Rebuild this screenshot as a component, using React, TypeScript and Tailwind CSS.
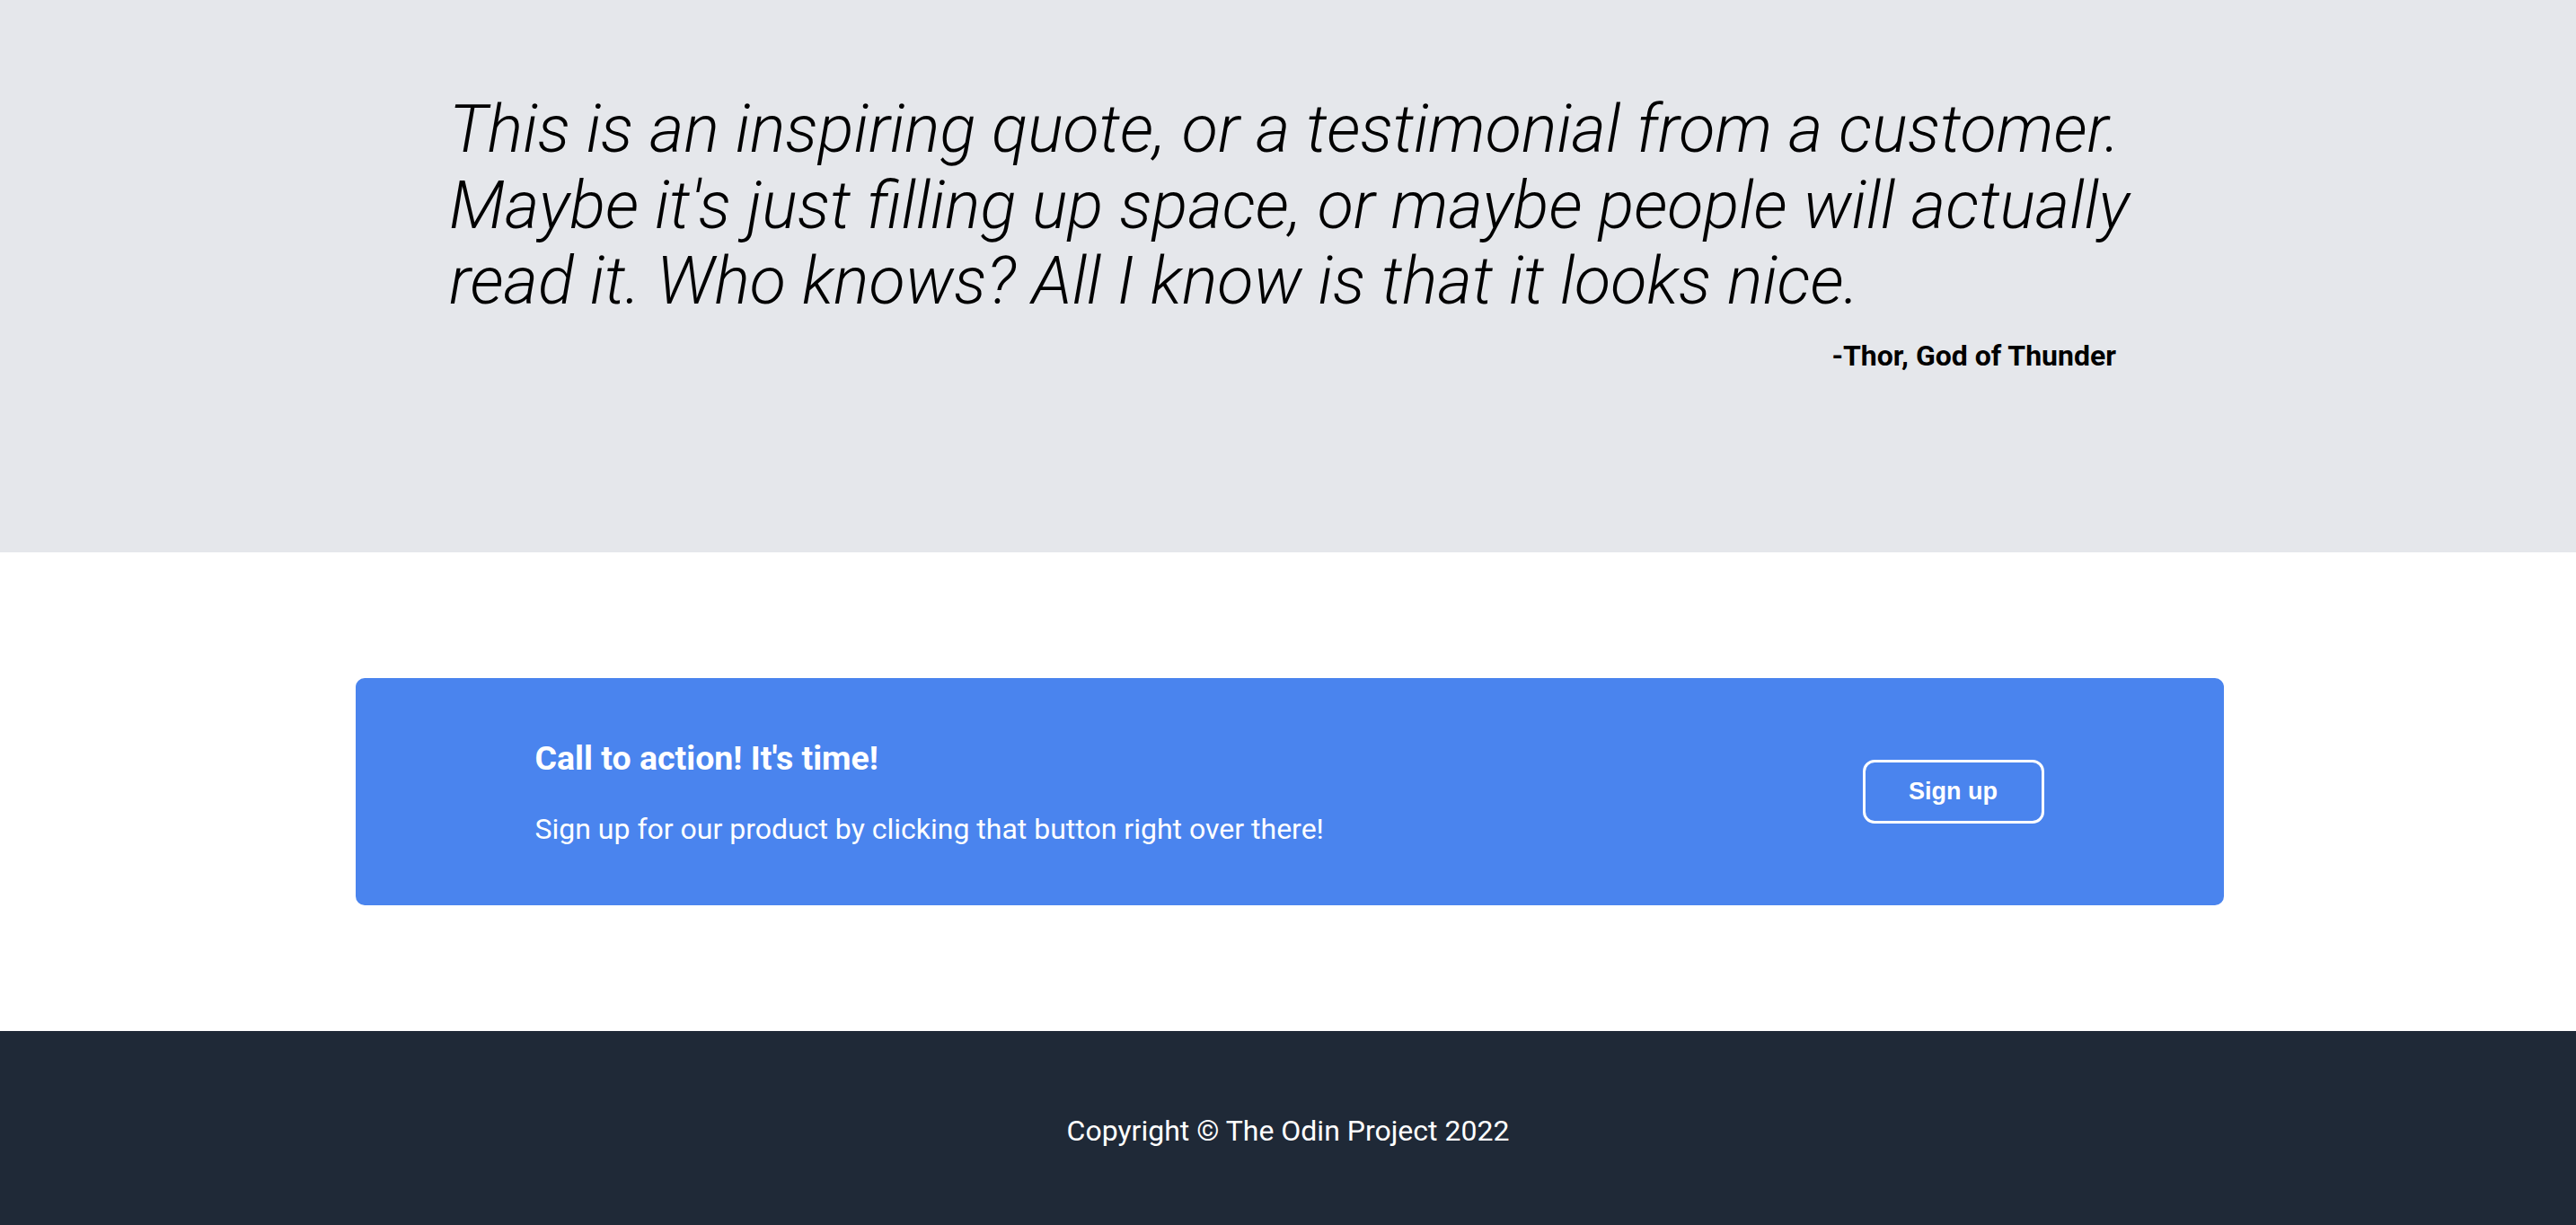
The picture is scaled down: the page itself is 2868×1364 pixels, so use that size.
export default function App() {
  return (
    <div className="min-h-screen bg-white font-['Roboto',sans-serif]">
      {/* quote */}
      <section className="h-[615px] bg-[#e5e7eb] pt-[102px]">
        <div className="mx-auto w-[1868px]">
          <p className="-mr-[40px] text-[74px] leading-[84.5px] font-light italic text-black">
            This is an inspiring quote, or a testimonial from a customer. Maybe it's just filling up
            space, or maybe people will actually read it. Who knows? All I know is that it looks nice.
          </p>
          <p className="mt-[22px] mr-[12px] text-right text-[32px] leading-[37px] font-bold text-black">
            -Thor, God of Thunder
          </p>
        </div>
      </section>

      {/* call to action */}
      <section className="py-[140px] pl-[3px]">
        <div className="mx-auto flex h-[253px] w-[2080px] items-center justify-between rounded-[10px] bg-[#4a84ee] px-[200px]">
          <div className="text-white">
            <h2 className="mb-[38px] text-[37.5px] leading-[45px] font-bold">Call to action! It's time!</h2>
            <p className="text-[32px] leading-[37px]">
              Sign up for our product by clicking that button right over there!
            </p>
          </div>
          <button className="flex h-[71px] w-[202px] items-center justify-center rounded-[13px] border-[3px] border-white font-['Liberation_Sans',Arial,sans-serif] text-[27px] font-bold text-white">
            Sign up
          </button>
        </div>
      </section>

      <footer className="h-[216px] bg-[#1f2937] pt-[93px] text-center">
        <p className="text-[32px] leading-[37px] text-white">Copyright © The Odin Project 2022</p>
      </footer>
    </div>
  );
}
